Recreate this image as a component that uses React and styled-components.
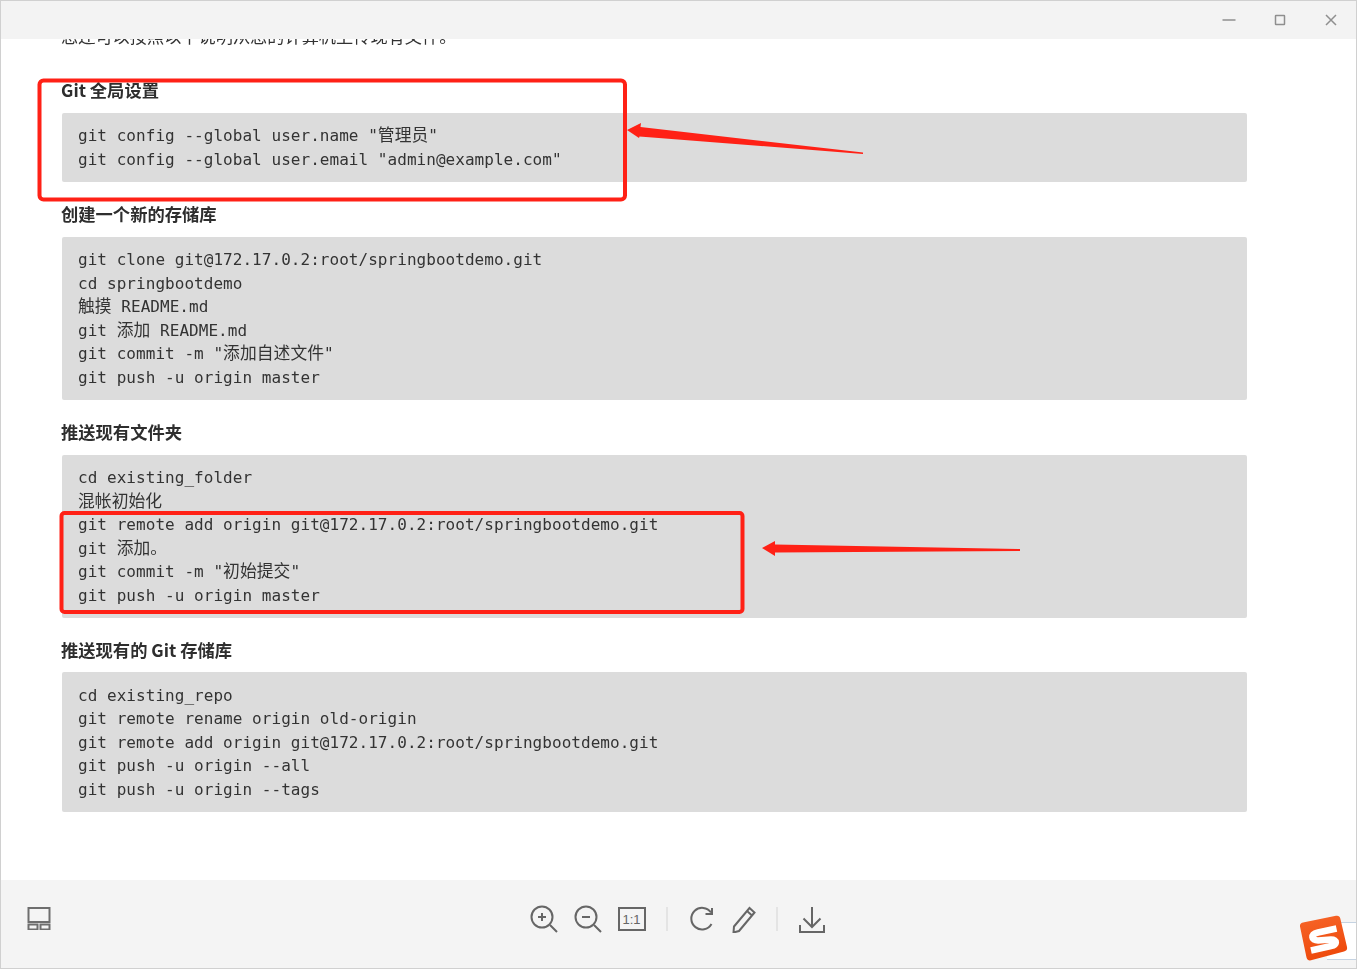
import React from 'react';
import styled, { createGlobalStyle } from 'styled-components';

const sections = [
	{
		title: 'Git 全局设置',
		lines: [
			'git config --global user.name "管理员"',
			'git config --global user.email "admin@example.com"',
		],
	},
	{
		title: '创建一个新的存储库',
		lines: [
			'git clone git@172.17.0.2:root/springbootdemo.git',
			'cd springbootdemo',
			'触摸 README.md',
			'git 添加 README.md',
			'git commit -m "添加自述文件"',
			'git push -u origin master',
		],
	},
	{
		title: '推送现有文件夹',
		lines: [
			'cd existing_folder',
			'混帐初始化',
			'git remote add origin git@172.17.0.2:root/springbootdemo.git',
			'git 添加。',
			'git commit -m "初始提交"',
			'git push -u origin master',
		],
	},
	{
		title: '推送现有的 Git 存储库',
		lines: [
			'cd existing_repo',
			'git remote rename origin old-origin',
			'git remote add origin git@172.17.0.2:root/springbootdemo.git',
			'git push -u origin --all',
			'git push -u origin --tags',
		],
	},
];

// chinese runs are a bit wider than the mono font's 16px in the picture
function renderLine(line) {
	return line.split(/([\u4e00-\u9fff。]+)/).map((part, i) => (
		i % 2 ? <Han key={i}>{part}</Han> : part
	));
}

function App() {
	return (
		<Viewer>
			<GlobalStyle />
			<TitleBar>
				<WindowButton aria-label='minimize'>
					<svg width='14' height='14' viewBox='0 0 14 14'>
						<path d='M0.5 7h13' />
					</svg>
				</WindowButton>
				<WindowButton aria-label='maximize'>
					<svg width='14' height='14' viewBox='0 0 14 14'>
						<rect x='2.5' y='2.5' width='9' height='9' rx='.5' />
					</svg>
				</WindowButton>
				<WindowButton aria-label='close'>
					<svg width='14' height='14' viewBox='0 0 14 14'>
						<path d='M2 2l10 10M12 2L2 12' />
					</svg>
				</WindowButton>
			</TitleBar>

			<Document>
				<Intro>您还可以按照以下说明从您的计算机上传现有文件。</Intro>
				{sections.map((section) => (
					<section key={section.title}>
						<Heading>{section.title}</Heading>
						<CodeBlock>
							{section.lines.map((line) => (
								<CodeLine key={line}>{renderLine(line)}</CodeLine>
							))}
						</CodeBlock>
					</section>
				))}
			</Document>

			<Footer>
				<ThumbButton aria-label='thumbnails'>
					<svg width='24' height='24' viewBox='0 0 24 24'>
						<rect x='1.5' y='2' width='21' height='14' />
						<rect x='1.5' y='18.5' width='9' height='5' />
						<rect x='13.5' y='18.5' width='9' height='5' />
					</svg>
				</ThumbButton>
				<Toolbar>
					<ToolIcon width='28' height='28' viewBox='0 0 28 28'>
						<circle cx='12' cy='12' r='10.5' />
						<path d='M20 20l7 7M8 12h8M12 8v8' />
					</ToolIcon>
					<ToolIcon width='28' height='28' viewBox='0 0 28 28'>
						<circle cx='12' cy='12' r='10.5' />
						<path d='M20 20l7 7M8 12h8' />
					</ToolIcon>
					<ActualSize>1:1</ActualSize>
					<Separator />
					<ToolIcon width='28' height='28' viewBox='0 0 28 28'>
						<path d='M23 7.5A10.8 10.8 0 1 0 23.5 19' />
						<path d='M24 3v6h-6.5' />
					</ToolIcon>
					<ToolIcon width='24' height='28' viewBox='0 0 24 28'>
						<path d='M2 21.5L17.500 3l5 4.500L7 26l-5.500 1.500zM15 6l5 4.500' />
					</ToolIcon>
					<Separator />
					<ToolIcon width='28' height='28' viewBox='0 0 28 28'>
						<path d='M14 2v20M5.500 13.500L14 22l8.500-8.500M2 20v7h24v-7' />
					</ToolIcon>
				</Toolbar>
			</Footer>

			<Annotations width='1357' height='969' viewBox='0 0 1357 969'>
				<rect x='39.500' y='80.500' width='585.500' height='119' rx='4' />
				<rect x='61.500' y='513' width='681' height='99' rx='3' />
				<polygon points='627,130 641,123 640.500,127 863,152.500 863,154 639.500,136.500 639,138' />
				<polygon points='762,548 775,541 775,544.500 1020,549 1020,551 775,552.500 775,556' />
			</Annotations>

			<ImeTab />
			<ImeLogo width='50' height='50' viewBox='0 0 50 50'>
				<defs>
					<linearGradient id='ime' x1='0' y1='0' x2='0.3' y2='1'>
						<stop offset='0' stopColor='#f7662a' />
						<stop offset='1' stopColor='#ee4a0c' />
					</linearGradient>
				</defs>
				<path
					d='M4 11.500L37 4.800Q40.500 4.200 41.300 7.500L48 36Q48.800 39.500 45 40.500L12 49.300Q8.500 50 7.500 46.500L1 15.500Q0.500 12.300 4 11.500z'
					fill='url(#ime)'
				/>
				<path
					d='M37.500 17.500L19 21.500C11 23.500 12 29.500 19 29.500L32 28.500C39 28.500 38 34 32 35L12 39.500'
					fill='none'
					stroke='#fff'
					strokeWidth='6.500'
				/>
			</ImeLogo>
		</Viewer>
	);
}

const GlobalStyle = createGlobalStyle`
	html, body {
		margin: 0;
		padding: 0;
		background-color: #fff;
	}
	* {
		box-sizing: border-box;
	}
`;

const Viewer = styled.div`
	position: relative;
	display: flex;
	flex-direction: column;
	width: 1357px;
	height: 969px;
	overflow: hidden;
	border: 1px solid #d0d0d0;
	background-color: #fff;
	font-family: "Noto Sans CJK SC", "Liberation Sans", sans-serif;
`;

const TitleBar = styled.header`
	display: flex;
	flex: none;
	align-items: center;
	justify-content: flex-end;
	height: 38px;
	background-color: #f3f3f3;
`;

const WindowButton = styled.div`
	display: flex;
	align-items: center;
	justify-content: center;
	width: 51px;
	height: 38px;
	svg {
		fill: none;
		stroke: #8f8f8f;
		stroke-width: 1.500;
	}
`;

const Document = styled.main`
	flex: 1;
	min-height: 0;
	overflow: hidden;
	padding: 0 109px 0 61px;
	color: #333;
	filter: blur(.4px);
`;

const Intro = styled.p`
	margin: -15px 0 30.200px -1px;
	font-size: 17.200px;
	line-height: 24px;
`;

const Heading = styled.h3`
	margin: 20px 0 10.800px -1px;
	font-size: 17.300px;
	font-weight: 700;
	line-height: 24px;
	font-family: "Noto Sans CJK SC", sans-serif;
	color: #2e2e2e;
`;

const CodeBlock = styled.pre`
	margin: 0;
	padding: 11.500px 16px 10.500px;
	border-radius: 2px;
	background-color: #dcdcdc;
	font-family: "DejaVu Sans Mono", "Noto Sans CJK SC", monospace;
	font-size: 16px;
	line-height: 23.500px;
	letter-spacing: .04px;
	color: #333;
`;

const CodeLine = styled.div`
	height: 23.500px;
	white-space: pre;
`;

const Han = styled.span`
	font-size: 16.800px;
	line-height: 1;
`;

const Footer = styled.footer`
	display: grid;
	flex: none;
	grid-template-columns: 1fr auto 1fr;
	align-items: start;
	height: 88px;
	padding: 25px 0 0 26px;
	background-color: #f4f4f4;
`;

const ThumbButton = styled.div`
	height: 28px;
	padding-top: 1px;
	svg {
		display: block;
		fill: none;
		stroke: #6e6e6e;
		stroke-width: 2;
	}
`;

const Toolbar = styled.div`
	display: flex;
	align-items: center;
	gap: 16px;
	transform: translateX(-14px);
`;

const ToolIcon = styled.svg`
	display: block;
	flex: none;
	fill: none;
	stroke: #666;
	stroke-width: 2;
`;

const ActualSize = styled.div`
	display: flex;
	align-items: center;
	justify-content: center;
	width: 28px;
	height: 24px;
	border: 2px solid #666;
	font-family: "Liberation Sans", sans-serif;
	font-size: 13px;
	color: #666;
`;

const Separator = styled.div`
	width: 2px;
	height: 24px;
	margin: 0 4px;
	background-color: #e4e4e4;
`;

const Annotations = styled.svg`
	position: absolute;
	top: -1px;
	left: -1px;
	pointer-events: none;
	rect {
		fill: none;
		stroke: #ff2116;
		stroke-width: 4;
	}
	polygon {
		fill: #ff2116;
	}
`;

const ImeTab = styled.div`
	position: absolute;
	right: -1px;
	bottom: 8px;
	width: 30px;
	height: 38px;
	border-top: 1px solid #c5d3e2;
	border-bottom: 1px solid #c5d3e2;
	background-color: #fff;
`;

const ImeLogo = styled.svg`
	position: absolute;
	right: 7px;
	bottom: 7px;
`;

export default App;
